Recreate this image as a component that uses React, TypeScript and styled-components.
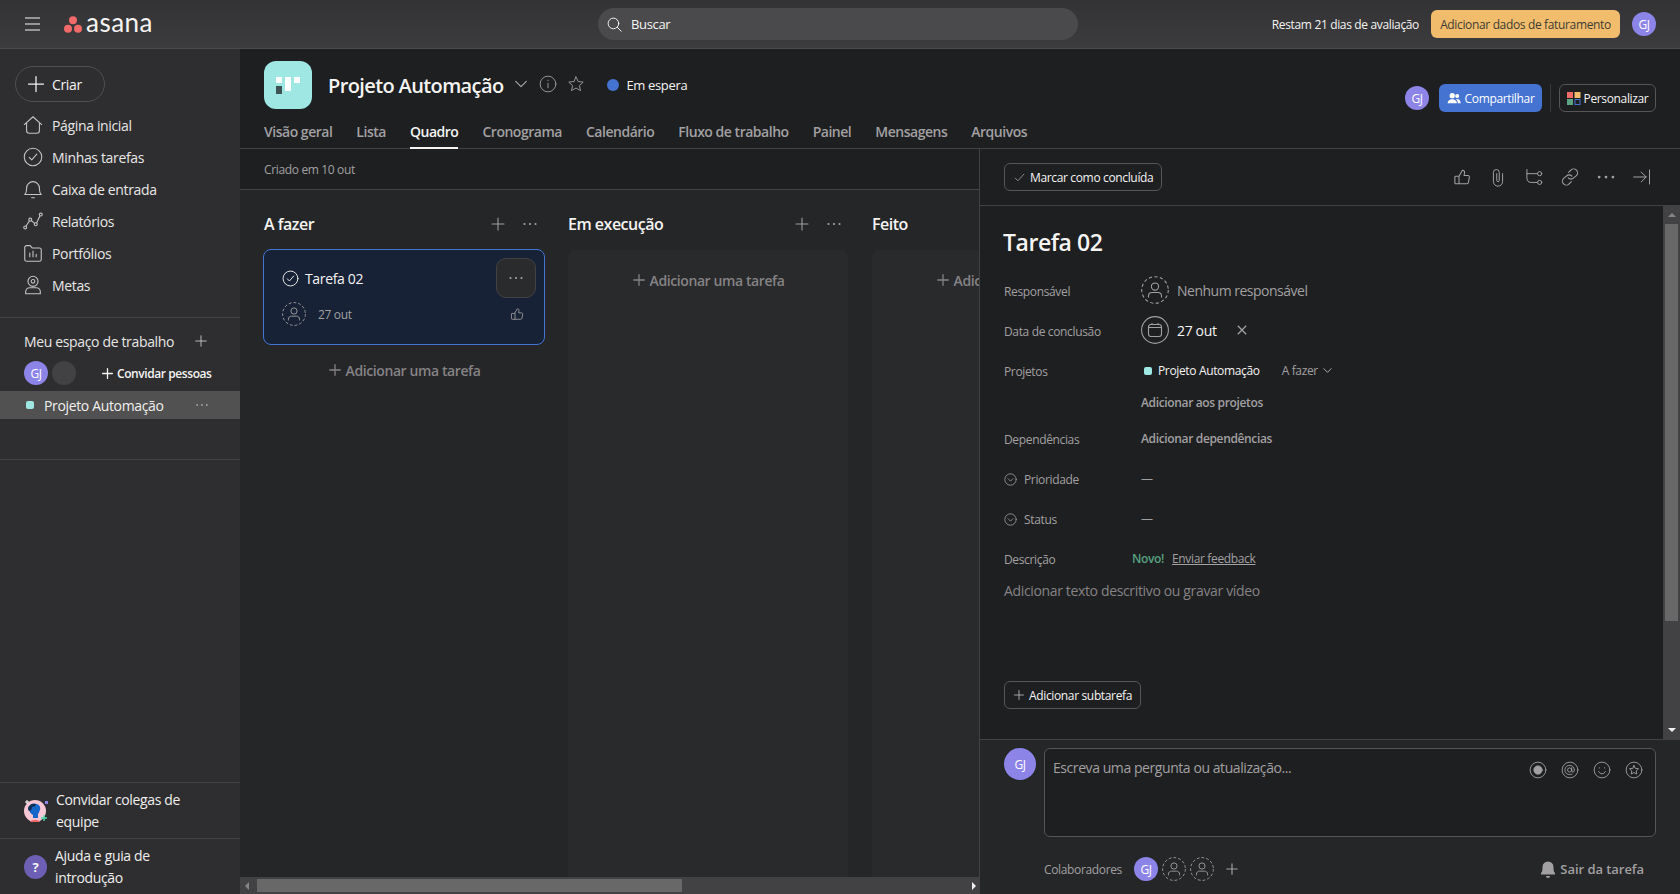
import React from "react";
import styled, { createGlobalStyle } from "styled-components";

const GlobalStyle = createGlobalStyle`
  html, body { margin: 0; padding: 0; height: 100%; background: #1e1f21; overflow: hidden; }
  body { font-family: "Open Sans", "Noto Sans", "Liberation Sans", sans-serif; letter-spacing: -0.35px; color: #f5f4f3; }
  #root { height: 100%; }
  * { box-sizing: border-box; }
`;

const Page = styled.div`display: flex; flex-direction: column; width: 1680px; height: 894px; overflow: hidden;`;

const TopBar = styled.header`
  height: 49px; flex: none; display: grid; grid-template-columns: 598px 480px 1fr; align-items: center;
  background: linear-gradient(#333335, #3c3c3e); border-bottom: 1px solid #4b4b4d;
`;
const TopLeft = styled.div`display: flex; align-items: center; padding-left: 25px;`;
const Burger = styled.svg`width: 15px; height: 14px; color: #f5f4f3;`;
const LogoWrap = styled.div`display: flex; align-items: center; margin-left: 24px; gap: 4px;`;
const LogoText = styled.span`font-family: "Lato", sans-serif; font-size: 26px; letter-spacing: 0.5px; color: #f5f4f3; line-height: 24px; margin-top: -4px;`;
const Search = styled.div`
  height: 32px; border-radius: 16px; background: #4a4a4c; display: flex; align-items: center; padding-left: 8px; gap: 8px;
  font-size: 13px; color: #f5f4f3;
`;
const TopRight = styled.div`display: flex; align-items: center; justify-content: flex-end; padding-right: 24px;`;
const Trial = styled.span`font-size: 12px; margin-right: 12px; color: #f5f4f3;`;
const BillingBtn = styled.div`
  height: 28px; width: 189px; border-radius: 6px; background: #f1bd6c; color: #3d3b33; font-size: 12px;
  display: flex; align-items: center; justify-content: center; margin-right: 12px;
`;
const Avatar = styled.div<{ $size: number; $font?: number }>`
  width: ${p => p.$size}px; height: ${p => p.$size}px; flex: none; border-radius: 50%; background: #8d84e8; color: #fff;
  font-size: ${p => p.$font ?? 12}px; display: flex; align-items: center; justify-content: center;
`;

const Body = styled.div`flex: 1; display: flex; min-height: 0;`;

const Sidebar = styled.aside`width: 240px; flex: none; display: flex; flex-direction: column; background: #2e2e30;`;
const CreateBtn = styled.div`
  width: 90px; height: 36px; margin: 17px 0 7px 15px; border: 1px solid #4f4f51; border-radius: 18px; display: flex; align-items: center;
  padding-left: 10px; gap: 6px; font-size: 14px; color: #f5f4f3;
`;
const NavItem = styled.div`
  height: 32px; display: flex; align-items: center; padding-left: 23px; gap: 9px; font-size: 14px; color: #e8e7e6;
`;
const NavIcon = styled.span`width: 20px; height: 20px; flex: none; display: flex; align-items: center; justify-content: center; color: #c4c3c3;`;
const SideDivider = styled.div<{ $gap?: number }>`height: 1px; background: #424244; margin-top: ${p => p.$gap ?? 0}px; flex: none;`;
const WsHeader = styled.div`
  height: 22px; margin-top: 12px; display: flex; align-items: center; justify-content: space-between; padding: 0 32px 0 24px;
  font-size: 14px; color: #e8e7e6; svg { color: #c4c3c3; }
`;
const WsMembers = styled.div`height: 24px; margin-top: 9px; display: flex; align-items: center; padding-left: 24px; gap: 4px;`;
const GhostAvatar = styled.div`width: 24px; height: 24px; border-radius: 50%; background: #424244;`;
const InviteLink = styled.div`margin-left: 21px; display: flex; align-items: center; gap: 3px; font-size: 12px; font-weight: 600; letter-spacing: -0.42px; color: #f5f4f3;`;
const ProjectRow = styled.div`
  height: 28px; margin-top: 6px; background: #515151; display: flex; align-items: center; padding: 0 31px 0 26px; font-size: 14px; color: #f0efee;
  svg { color: #a2a0a2; }
`;
const Dot = styled.span<{ $size?: number }>`
  width: ${p => p.$size ?? 8}px; height: ${p => p.$size ?? 8}px; border-radius: 2px; background: #9ee7e3; flex: none;
`;
const ProjectName = styled.span`margin-left: 10px; flex: 1;`;
const Spacer = styled.div`flex: 1;`;
const SideFooter = styled.div<{ $gap: number }>`
  height: 55px; flex: none; display: flex; align-items: center; padding-left: 24px; gap: ${p => p.$gap}px; font-size: 14px; line-height: 22px; color: #f0efee;
`;
const FooterLabel = styled.div`width: 140px;`;
const HelpIcon = styled.div`
  width: 23px; height: 24px; border-radius: 50%; background: #6d5fb3; color: #f5f4f3; font-size: 13px; font-weight: 700; display: flex; align-items: center; justify-content: center; flex: none;
`;

const Main = styled.main`flex: 1; min-width: 0; display: flex; flex-direction: column; background: #1e1f21;`;
const ProjectHeader = styled.div`height: 100px; flex: none; padding: 12px 24px 0; display: flex; flex-direction: column; border-bottom: 1px solid #424244;`;
const HeaderTop = styled.div`height: 48px; display: flex; align-items: center;`;
const ProjectIcon = styled.div`width: 48px; height: 48px; border-radius: 12px; background: #9ee7e3; display: flex; align-items: center; justify-content: center;`;
const ProjectTitle = styled.h1`margin: 2px 0 0 16px; font-size: 20px; font-weight: 600; letter-spacing: -0.62px; color: #f5f4f3; line-height: 28px;`;
const HeaderIcons = styled.div`display: flex; align-items: center; margin-left: 10px; gap: 10px; color: #a2a0a2; margin-top: -2px;`;
const Status = styled.div`display: flex; align-items: center; gap: 7px; margin-left: 22px; font-size: 13px;`;
const StatusDot = styled.span`width: 12px; height: 12px; border-radius: 50%; background: #4573d2;`;
const HeaderRight = styled.div`margin-left: auto; display: flex; align-items: center; margin-top: 26px;`;
const ShareBtn = styled.div`
  width: 103px; height: 28px; margin-left: 10px; border-radius: 6px; background: #4573d2; color: #fff; font-size: 12px;
  display: flex; align-items: center; justify-content: center; gap: 4px;
`;
const VSep = styled.div`width: 1px; height: 28px; background: #3a3a3c; margin: 0 8px;`;
const CustomBtn = styled.div`
  width: 97px; height: 28px; border: 1px solid #565557; border-radius: 6px; font-size: 12px; color: #f5f4f3;
  display: flex; align-items: center; justify-content: center; gap: 3px;
`;
const Tabs = styled.nav`display: flex; gap: 24px; margin-top: 9px; height: 30px;`;
const Tab = styled.div<{ $active?: boolean }>`
  font-size: 14px; font-weight: 600; letter-spacing: -0.48px; color: ${p => (p.$active ? "#f5f4f3" : "#a2a0a2")}; line-height: 28px; height: 31px;
  border-bottom: 2px solid ${p => (p.$active ? "#f5f4f3" : "transparent")};
`;

const Split = styled.div`flex: 1; min-height: 0; display: flex;`;
const LeftPane = styled.div`width: 739px; flex: none; display: flex; flex-direction: column;`;
const SubBar = styled.div`height: 41px; flex: none; display: flex; align-items: center; padding-left: 24px; font-size: 12px; color: #a2a0a2; border-bottom: 1px solid #424244;`;
const Board = styled.div`flex: 1; min-height: 0; display: flex; background: #252628; padding-left: 24px; gap: 24px; overflow: hidden;`;
const Column = styled.section`width: 280px; flex: none; display: flex; flex-direction: column;`;
const ColHead = styled.div`
  height: 60px; flex: none; display: flex; align-items: center; font-size: 16px; font-weight: 600; letter-spacing: -0.5px; color: #f5f4f3; padding-top: 8px;
`;
const ColTitle = styled.span`flex: 1;`;
const ColIcons = styled.div`display: flex; align-items: center; gap: 16px; padding-right: 6px; color: #a2a0a2;`;
const ColBody = styled.div<{ $filled?: boolean }>`
  flex: 1; display: flex; flex-direction: column; border-radius: 8px 8px 0 0; background: ${p => (p.$filled ? "#292a2c" : "transparent")};
`;
const Card = styled.article`
  height: 96px; flex: none; margin: -1px -1px 0; background: #182236; border: 1px solid #4573d2; border-radius: 8px; position: relative; padding: 17px 18px 0;
`;
const CardTitle = styled.div`display: flex; align-items: center; gap: 6px; font-size: 14px; color: #f5f4f3; height: 22px;`;
const CardMeta = styled.div`display: flex; align-items: center; margin-top: 13px; font-size: 12px; color: #a2a0a2; gap: 12px;`;
const CardLike = styled.span`margin-left: auto; margin-right: 2px; display: flex; color: #a2a0a2;`;
const CardMenu = styled.div`
  position: absolute; right: 8px; top: 8px; width: 40px; height: 40px; border-radius: 10px; background: #2a2b2d; border: 1px solid #424244;
  display: flex; align-items: center; justify-content: center; color: #a2a0a2;
`;
const AddTask = styled.div<{ $top: number }>`
  margin-top: ${p => p.$top}px; display: flex; align-items: center; justify-content: center; gap: 4px; font-size: 14px; font-weight: 600; letter-spacing: -0.4px; color: #858385; height: 20px;
`;
const HScroll = styled.div`height: 17px; flex: none; background: #424244; display: flex; align-items: center; padding: 0 3px 0 5px;`;
const HThumb = styled.div`width: 425px; height: 13px; background: #686868; margin-left: 8px;`;
const TriangleL = styled.span`width: 0; height: 0; border: 4px solid transparent; border-right-color: #858585; border-left: 0;`;
const TriangleR = styled.span`width: 0; height: 0; border: 4px solid transparent; border-left-color: #f0f0f0; border-right: 0; margin-left: auto;`;

const Pane = styled.div`flex: 1; min-width: 0; display: flex; flex-direction: column; border-left: 1px solid #424244; background: #1e1f21;`;
const PaneBar = styled.div`height: 57px; flex: none; display: flex; align-items: center; padding: 0 28px 0 24px; border-bottom: 1px solid #424244;`;
const OutlineBtn = styled.div`
  height: 28px; border: 1px solid #565557; border-radius: 6px; display: inline-flex; align-items: center; padding: 0 8px; gap: 4px;
  font-size: 12px; font-weight: 500; color: #f5f4f3; svg { color: #c4c3c3; }
`;
const PaneTools = styled.div`
  margin-left: auto; display: grid; grid-auto-flow: column; grid-auto-columns: 20px; gap: 16px; justify-items: center; align-items: center; color: #a2a0a2;
`;
const PaneScrollArea = styled.div`flex: 1; min-height: 0; display: flex;`;
const PaneContent = styled.div`flex: 1; min-width: 0; padding: 19px 24px 0; display: flex; flex-direction: column;`;
const TaskTitle = styled.h2`margin: 0 0 0 -1px; font-size: 23px; font-weight: 600; line-height: 34px; color: #f5f4f3; letter-spacing: -0.45px;`;
const Fields = styled.div`display: grid; grid-template-columns: 137px 1fr; grid-template-rows: 40px 40px 68px 40px 40px 40px 40px; margin-top: 11px;`;
const FieldLabel = styled.div`font-size: 12px; color: #a2a0a2; display: flex; align-items: center; gap: 7px; padding-top: 2px;`;
const FieldValue = styled.div<{ $muted?: boolean }>`
  display: flex; align-items: center; font-size: 14px; color: ${p => (p.$muted ? "#a2a0a2" : "#f5f4f3")}; gap: 8px; letter-spacing: ${p => (p.$muted ? "-0.5px" : "-0.35px")};
`;
const ProjectLine = styled.div`display: flex; align-items: center; height: 40px; padding-left: 3px; padding-bottom: 1px;`;
const ProjectTag = styled.span`font-size: 12px; font-weight: 500; color: #f5f4f3; margin-left: 6px;`;
const SectionTag = styled.span`font-size: 12px; color: #a2a0a2; margin-left: 22px; display: flex; align-items: center; gap: 4px; svg { color: #c4c3c3; }`;
const SmallAction = styled.div`font-size: 12px; font-weight: 600; color: #a2a0a2; display: flex; align-items: center;`;
const ProjectsCell = styled.div`display: flex; flex-direction: column; margin-top: 1px;`;
const ProjectsAdd = styled(SmallAction)`height: 22px;`;
const ProjectsLabel = styled(FieldLabel)`align-self: start; height: 40px;`;
const Dash = styled.span`color: #a2a0a2; font-size: 12px;`;
const NovoRow = styled.div`display: flex; align-items: center; gap: 8px; margin-left: -9px; font-size: 12px;`;
const Novo = styled.span`color: #58a182; font-weight: 600;`;
const Feedback = styled.span`color: #a2a0a2; text-decoration: underline;`;
const Placeholder = styled.div`font-size: 14px; color: #858385; margin-top: 2px; line-height: 22px;`;
const SubtaskBtn = styled(OutlineBtn)`align-self: flex-start; margin-top: 79px;`;
const VScroll = styled.div`width: 17px; flex: none; background: #424244; display: flex; flex-direction: column; align-items: center; padding: 7px 0 7px;`;
const VThumb = styled.div`width: 13px; height: 397px; background: #686868; margin-top: 7px;`;
const TriUp = styled.span`width: 0; height: 0; border: 4px solid transparent; border-bottom-color: #858585; border-top: 0;`;
const TriDown = styled.span`width: 0; height: 0; border: 4px solid transparent; border-top-color: #f0f0f0; border-bottom: 0; margin-top: auto;`;

const Composer = styled.div`height: 155px; flex: none; background: #252628; border-top: 1px solid #424244; padding: 8px 24px 0;`;
const ComposerRow = styled.div`display: flex; gap: 8px;`;
const CommentBox = styled.div`
  flex: 1; height: 89px; background: #1e1f21; border: 1px solid #565557; border-radius: 6px; padding: 9px 8px; display: flex; justify-content: space-between;
  font-size: 14px; line-height: 20px; letter-spacing: -0.43px; color: #a2a0a2;
`;
const CommentIcons = styled.div`display: flex; gap: 14px; padding: 3px 4px 0 0; color: #a2a0a2; height: 20px;`;
const Collaborators = styled.div`display: flex; align-items: center; margin: 20px 0 0 40px; height: 24px; font-size: 12px; color: #a2a0a2; gap: 4px;`;
const CollabLabel = styled.span`width: 86px;`;
const CollabPlus = styled.span`display: flex; margin-left: 7px; color: #a2a0a2;`;
const Leave = styled.div`margin-left: auto; margin-right: 12px; display: flex; align-items: center; gap: 4px; font-size: 13px; font-weight: 600; letter-spacing: -0.05px; color: #a2a0a2;`;

type IconProps = { size?: number; sw?: number };
const Ico: React.FC<React.PropsWithChildren<IconProps>> = ({ size = 16, sw = 1.2, children }) => (
  <svg width={size} height={size} viewBox="0 0 24 24" fill="none" stroke="currentColor" strokeWidth={sw} strokeLinecap="round" strokeLinejoin="round" style={{ flex: "none" }}>{children}</svg>
);
const Plus = ({ size = 16, sw = 1.6 }: IconProps) => <Ico size={size} sw={sw}><path d="M12 3v18M3 12h18" /></Ico>;
const Dots = ({ size = 16 }: IconProps) => (
  <svg width={size} height={size} viewBox="0 0 16 16" fill="currentColor"><circle cx="2.5" cy="8" r="1.1" /><circle cx="8" cy="8" r="1.1" /><circle cx="13.5" cy="8" r="1.1" /></svg>
);
const CheckCircle = ({ size = 16 }: IconProps) => <Ico size={size} sw={1.3}><circle cx="12" cy="12" r="10.5" /><path d="M7.5 12.5l3 3 6-7" /></Ico>;
const Thumb = ({ size = 16 }: IconProps) => (
  <Ico size={size} sw={1.4}><path d="M8 21H3.5a1 1 0 0 1-1-1v-8a1 1 0 0 1 1-1H8zM8 11l4.5-8c1.8 0 3 1.2 3 3l-.7 4H20c1.2 0 2 1 1.8 2.2l-1.2 7C20.4 20.2 19.6 21 18.5 21H8" /></Ico>
);
const Chevron = ({ size = 12 }: IconProps) => <Ico size={size} sw={1.8}><path d="M4 8l8 8 8-8" /></Ico>;
const DashedUser = ({ size = 24 }: IconProps) => (
  <svg width={size} height={size} viewBox="0 0 28 28" fill="none" stroke="#a2a0a2" strokeWidth="1.05" style={{ flex: "none" }}>
    <circle cx="14" cy="14" r="13.3" strokeDasharray="3.3 2.3" />
    <circle cx="14" cy="10.5" r="3.6" />
    <path d="M7.5 21.5v-1.5c0-2 1.6-3.5 3.5-3.5h6c1.9 0 3.5 1.5 3.5 3.5v1.5" />
  </svg>
);
const CircleChevron = () => <Ico size={13} sw={1.5}><circle cx="12" cy="12" r="10.5" /><path d="M7.5 10.5l4.5 4.5 4.5-4.5" /></Ico>;

const nav: [string, React.ReactNode][] = [
  ["Página inicial", <Ico size={22}><path d="M2.5 11.5L12 3l9.5 8.5M5 9.5V18a3 3 0 0 0 3 3h8a3 3 0 0 0 3-3V9.5" /></Ico>],
  ["Minhas tarefas", <CheckCircle size={20} />],
  ["Caixa de entrada", <Ico size={22}><path d="M3 18c2-1.5 2-4 2-7a7 7 0 0 1 14 0c0 3 0 5.5 2 7zM10.5 21.5h3" /></Ico>],
  ["Relatórios", <Ico size={22}><circle cx="3.5" cy="19" r="1.6" /><circle cx="9" cy="10.5" r="1.6" /><circle cx="15" cy="15.5" r="1.6" /><circle cx="20.5" cy="5" r="1.6" /><path d="M4.5 17.5l3.5-5.5M10.3 11.5l3.4 3M16 14l3.5-7.5" /></Ico>],
  ["Portfólios", <Ico size={22}><path d="M3 6a2 2 0 0 1 2-2h4l2 2.5h8a2 2 0 0 1 2 2V19a2 2 0 0 1-2 2H5a2 2 0 0 1-2-2z" /><path d="M8.5 16v-4M12 16v-6M15.5 16v-2.5" /></Ico>],
  ["Metas", <Ico size={22}><circle cx="12" cy="8" r="5.5" /><circle cx="12" cy="8" r="2" /><path d="M4 21.5v-2c0-2.5 2-4.5 4.5-4.5h7c2.5 0 4.5 2 4.5 4.5v2z" /></Ico>],
];
const tabs = ["Visão geral", "Lista", "Quadro", "Cronograma", "Calendário", "Fluxo de trabalho", "Painel", "Mensagens", "Arquivos"];

export default function App() {
  return (
    <Page>
      <GlobalStyle />
      <TopBar>
        <TopLeft>
          <Burger viewBox="0 0 15 14" fill="none" stroke="currentColor" strokeWidth="1.1"><path d="M0 1h15M0 7h15M0 13h15" /></Burger>
          <LogoWrap>
            <svg width="18" height="17" viewBox="0 0 18 17" fill="#f06a6a"><circle cx="9" cy="4.2" r="4" /><circle cx="4" cy="12.8" r="4" /><circle cx="14" cy="12.8" r="4" /></svg>
            <LogoText>asana</LogoText>
          </LogoWrap>
        </TopLeft>
        <Search>
          <Ico size={17} sw={1.4}><circle cx="10.5" cy="10.5" r="7.5" /><path d="M16 16l5.5 5.5" /></Ico>
          Buscar
        </Search>
        <TopRight>
          <Trial>Restam 21 dias de avaliação</Trial>
          <BillingBtn>Adicionar dados de faturamento</BillingBtn>
          <Avatar $size={24}>GJ</Avatar>
        </TopRight>
      </TopBar>
      <Body>
        <Sidebar>
          <CreateBtn><Plus size={20} sw={1.5} />Criar</CreateBtn>
          {nav.map(([label, icon]) => <NavItem key={label}><NavIcon>{icon}</NavIcon>{label}</NavItem>)}
          <SideDivider $gap={16} />
          <WsHeader>Meu espaço de trabalho <Plus size={14} /></WsHeader>
          <WsMembers>
            <Avatar $size={24}>GJ</Avatar>
            <GhostAvatar />
            <InviteLink><Plus size={13} sw={2.4} />Convidar pessoas</InviteLink>
          </WsMembers>
          <ProjectRow>
            <Dot /><ProjectName>Projeto Automação</ProjectName><Dots size={14} />
          </ProjectRow>
          <SideDivider $gap={40} />
          <Spacer />
          <SideDivider />
          <SideFooter $gap={7}>
            <svg width="25" height="26" viewBox="0 0 25 26" style={{ flex: "none" }}>
              <circle cx="11" cy="13" r="11" fill="#f8c6d4" />
              <path d="M6 24c1-3 9-3 10 0z" fill="#f06a6a" />
              <path d="M5 11c0-4 4-6 7-5 3 0 5 3 4 6-1 2-1 3-2 4v4H9v-3c-2-1-4-3-4-6z" fill="#1467c8" />
              <path d="M4 11c0-4 4-6 8-5 0 2-2 3-4 3 0 2-1 3-2 4-1 0-2-1-2-2z" fill="#0e2f57" />
              <path d="M20 17v6M17 20h6" stroke="#4ce0b3" strokeWidth="1.3" fill="none" />
              <rect x="21" y="3" width="3" height="3" fill="#8d84e8" />
              <path d="M3 2v4M1 4h4" stroke="#fff" strokeWidth="1" fill="none" />
            </svg>
            <FooterLabel>Convidar colegas de equipe</FooterLabel>
          </SideFooter>
          <SideDivider />
          <SideFooter $gap={8}>
            <HelpIcon>?</HelpIcon>
            <FooterLabel>Ajuda e guia de introdução</FooterLabel>
          </SideFooter>
        </Sidebar>
        <Main>
          <ProjectHeader>
            <HeaderTop>
              <ProjectIcon>
                <svg width="24" height="17" viewBox="0 0 24 17"><rect x="0" y="0" width="6" height="6" fill="#fff" /><rect x="9" y="0" width="6" height="14" fill="#fff" /><rect x="18" y="0" width="6" height="6" fill="#fff" /><rect x="0" y="9" width="6" height="8" fill="#3e5254" /></svg>
              </ProjectIcon>
              <ProjectTitle>Projeto Automação</ProjectTitle>
              <HeaderIcons>
                <Chevron size={16} />
                <Ico size={18} sw={1.2}><circle cx="12" cy="12" r="10.5" /><path d="M12 11v6M12 7v.6" /></Ico>
                <Ico size={18} sw={1.2}><path d="M12 2.5l2.9 6.2 6.7.8-5 4.6 1.4 6.7-6-3.4-6 3.4 1.4-6.7-5-4.6 6.7-.8z" /></Ico>
              </HeaderIcons>
              <Status><StatusDot />Em espera</Status>
              <HeaderRight>
                <Avatar $size={24}>GJ</Avatar>
                <ShareBtn>
                  <svg width="14" height="14" viewBox="0 0 24 24" fill="#fff"><circle cx="9" cy="8" r="4.5" /><circle cx="17.5" cy="8.5" r="3.5" /><path d="M1 21c0-4 3-7 8-7s8 3 8 7zM18.5 21c0-3-1-5.5-3-7 4-.8 8 1.5 8 7z" /></svg>
                  Compartilhar
                </ShareBtn>
                <VSep />
                <CustomBtn>
                  <svg width="14" height="14" viewBox="0 0 14 14"><rect x="0" y="1" width="6" height="6" fill="#f06a6a" /><rect x="7.5" y="1" width="6" height="6" fill="#f1bd6c" /><rect x="0" y="8" width="6" height="6" fill="#5da283" /><rect x="8" y="8.5" width="5" height="5" fill="none" stroke="#4573d2" /></svg>
                  Personalizar
                </CustomBtn>
              </HeaderRight>
            </HeaderTop>
            <Tabs>{tabs.map(t => <Tab key={t} $active={t === "Quadro"}>{t}</Tab>)}</Tabs>
          </ProjectHeader>
          <Split>
            <LeftPane>
              <SubBar>Criado em 10 out</SubBar>
              <Board>
                <Column>
                  <ColHead><ColTitle>A fazer</ColTitle><ColIcons><Plus /><Dots /></ColIcons></ColHead>
                  <ColBody>
                    <Card>
                      <CardTitle><CheckCircle size={17} />Tarefa 02</CardTitle>
                      <CardMeta><DashedUser />27 out<CardLike><Thumb size={14} /></CardLike></CardMeta>
                      <CardMenu><Dots /></CardMenu>
                    </Card>
                    <AddTask $top={15}><Plus size={14} sw={2.2} />Adicionar uma tarefa</AddTask>
                  </ColBody>
                </Column>
                <Column>
                  <ColHead><ColTitle>Em execução</ColTitle><ColIcons><Plus /><Dots /></ColIcons></ColHead>
                  <ColBody $filled><AddTask $top={20}><Plus size={14} sw={2.2} />Adicionar uma tarefa</AddTask></ColBody>
                </Column>
                <Column>
                  <ColHead><ColTitle>Feito</ColTitle></ColHead>
                  <ColBody $filled><AddTask $top={20}><Plus size={14} sw={2.2} />Adicionar uma tarefa</AddTask></ColBody>
                </Column>
              </Board>
              <HScroll><TriangleL /><HThumb /><TriangleR /></HScroll>
            </LeftPane>
            <Pane>
              <PaneBar>
                <OutlineBtn>
                  <Ico size={13}><path d="M4 13l5 5L20 6" /></Ico>Marcar como concluída
                </OutlineBtn>
                <PaneTools>
                  <Thumb size={18} />
                  <Ico size={20}><path d="M17.5 8v9.5a5.5 5.5 0 0 1-11 0V6.5a3.5 3.5 0 0 1 7 0V16a1.5 1.5 0 0 1-3 0V8" /></Ico>
                  <Ico size={20}><path d="M3.5 3v10c0 3 1.5 5.5 4.5 5.500h8M3.5 8H16" /><circle cx="18.8" cy="8" r="2.5" /><circle cx="18.8" cy="18.5" r="2.5" /></Ico>
                  <Ico size={22}><path d="M10.5 7L13 4.5a4 4 0 0 1 6 6L16 13a4 4 0 0 1-6 0" /><path d="M13.5 17L11 19.5a4 4 0 0 1-6-6L8 11a4 4 0 0 1 6 0" /></Ico>
                  <Dots size={20} />
                  <Ico size={20}><path d="M2 12h15M11 6l6 6-6 6M21 3.5v17" /></Ico>
                </PaneTools>
              </PaneBar>
              <PaneScrollArea>
                <PaneContent>
                  <TaskTitle>Tarefa 02</TaskTitle>
                  <Fields>
                    <FieldLabel>Responsável</FieldLabel>
                    <FieldValue $muted><DashedUser size={28} />Nenhum responsável</FieldValue>
                    <FieldLabel>Data de conclusão</FieldLabel>
                    <FieldValue>
                      <svg width="28" height="28" viewBox="0 0 28 28" fill="none" stroke="#a2a0a2" strokeWidth="1.1"><circle cx="14" cy="14" r="13.4" /><rect x="7.5" y="8.5" width="13" height="12" rx="2.5" /><path d="M7.5 11.5h13M11 7v2M17 7v2" /></svg>
                      27 out
                      <svg width="10" height="10" viewBox="0 0 10 10" stroke="#a2a0a2" strokeWidth="1.3" style={{ marginLeft: 12 }}><path d="M.8.8l8.4 8.4M9.2.8L.8 9.2" /></svg>
                    </FieldValue>
                    <ProjectsLabel>Projetos</ProjectsLabel>
                    <ProjectsCell>
                      <ProjectLine><Dot />
                        <ProjectTag>Projeto Automação</ProjectTag>
                        <SectionTag>A fazer <Chevron size={11} /></SectionTag>
                      </ProjectLine>
                      <ProjectsAdd>Adicionar aos projetos</ProjectsAdd>
                    </ProjectsCell>
                    <FieldLabel>Dependências</FieldLabel>
                    <SmallAction>Adicionar dependências</SmallAction>
                    <FieldLabel><CircleChevron />Prioridade</FieldLabel>
                    <FieldValue><Dash>—</Dash></FieldValue>
                    <FieldLabel><CircleChevron />Status</FieldLabel>
                    <FieldValue><Dash>—</Dash></FieldValue>
                    <FieldLabel>Descrição</FieldLabel>
                    <FieldValue><NovoRow><Novo>Novo!</Novo><Feedback>Enviar feedback</Feedback></NovoRow></FieldValue>
                  </Fields>
                  <Placeholder>Adicionar texto descritivo ou gravar vídeo</Placeholder>
                  <SubtaskBtn><Plus size={12} />Adicionar subtarefa</SubtaskBtn>
                </PaneContent>
                <VScroll><TriUp /><VThumb /><TriDown /></VScroll>
              </PaneScrollArea>
              <Composer>
                <ComposerRow>
                  <Avatar $size={32}>GJ</Avatar>
                  <CommentBox>
                    Escreva uma pergunta ou atualização...
                    <CommentIcons>
                      <Ico size={18} sw={1.2}><circle cx="12" cy="12" r="10.5" /><circle cx="12" cy="12" r="5.5" fill="currentColor" /></Ico>
                      <Ico size={18} sw={1.2}><circle cx="12" cy="12" r="10.5" /><circle cx="11.5" cy="12" r="2.8" /><path d="M14.3 9v4c0 2.5 3.5 2.5 3.5-1a6.3 6.3 0 1 0-3 5.4" /></Ico>
                      <Ico size={18} sw={1.2}><circle cx="12" cy="12" r="10.5" /><path d="M7.5 14c1 2 2.5 3 4.5 3s3.5-1 4.5-3M8.5 9v.5M15.5 9v.5" /></Ico>
                      <Ico size={18} sw={1.2}><circle cx="12" cy="12" r="10.5" /><path d="M12 6l1.8 3.8 4.2.5-3.1 2.9.8 4.2-3.7-2-3.7 2 .8-4.2L6 10.3l4.2-.5z" /></Ico>
                    </CommentIcons>
                  </CommentBox>
                </ComposerRow>
                <Collaborators>
                  <CollabLabel>Colaboradores</CollabLabel>
                  <Avatar $size={24}>GJ</Avatar>
                  <DashedUser />
                  <DashedUser />
                  <CollabPlus><Plus size={14} sw={2} /></CollabPlus>
                  <Leave>
                    <svg width="16" height="18" viewBox="0 0 16 18" fill="#a2a0a2"><path d="M1 13c1.5-1.5 1.5-3 1.5-6a5.5 5.5 0 0 1 11 0c0 3 0 4.5 1.5 6v1.5H1zM6 16h4a2 2 0 0 1-4 0z" /></svg>
                    Sair da tarefa
                  </Leave>
                </Collaborators>
              </Composer>
            </Pane>
          </Split>
        </Main>
      </Body>
    </Page>
  );
}
